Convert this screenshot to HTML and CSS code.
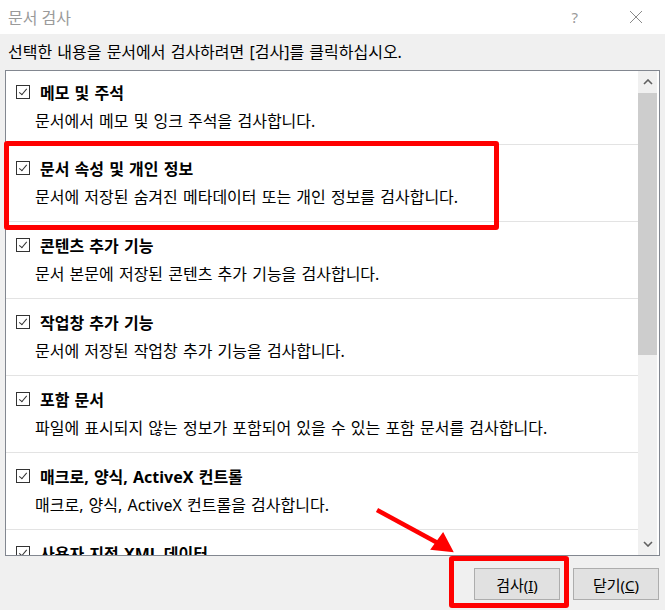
FILE: index.html
```html
<!DOCTYPE html>
<html lang="ko">
<head>
    <meta charset="UTF-8">
    <title>문서 검사</title>
    <link rel="stylesheet" href="styles.css">
</head>
<body>
    <div class="dialog">
        <div class="titlebar">
            <span class="title">문서 검사</span>
            <span class="help">?</span>
            <svg class="close" width="14" height="14" viewBox="0 0 14 14">
                <path d="M1 1 L13 13 M13 1 L1 13" stroke="#8a8a8a" stroke-width="1" fill="none"/>
            </svg>
        </div>

        <div class="intro">선택한 내용을 문서에서 검사하려면 [검사]를 클릭하십시오.</div>

        <div class="listbox">
            <div class="items">
                <div class="item">
                    <div class="item-title"><span class="check"></span>메모 및 주석</div>
                    <div class="item-desc">문서에서 메모 및 잉크 주석을 검사합니다.</div>
                </div>
                <div class="item">
                    <div class="item-title"><span class="check"></span>문서 속성 및 개인 정보</div>
                    <div class="item-desc">문서에 저장된 숨겨진 메타데이터 또는 개인 정보를 검사합니다.</div>
                </div>
                <div class="item">
                    <div class="item-title"><span class="check"></span>콘텐츠 추가 기능</div>
                    <div class="item-desc">문서 본문에 저장된 콘텐츠 추가 기능을 검사합니다.</div>
                </div>
                <div class="item">
                    <div class="item-title"><span class="check"></span>작업창 추가 기능</div>
                    <div class="item-desc">문서에 저장된 작업창 추가 기능을 검사합니다.</div>
                </div>
                <div class="item">
                    <div class="item-title"><span class="check"></span>포함 문서</div>
                    <div class="item-desc">파일에 표시되지 않는 정보가 포함되어 있을 수 있는 포함 문서를 검사합니다.</div>
                </div>
                <div class="item">
                    <div class="item-title"><span class="check"></span>매크로, 양식, ActiveX 컨트롤</div>
                    <div class="item-desc">매크로, 양식, ActiveX 컨트롤을 검사합니다.</div>
                </div>
                <div class="item">
                    <div class="item-title"><span class="check"></span>사용자 지정 XML 데이터</div>
                </div>
            </div>

            <div class="scrollbar">
                <div class="arrow">
                    <svg width="10" height="6" viewBox="0 0 10 6"><path d="M1 5 L5 1 L9 5" stroke="#606060" stroke-width="1.6" fill="none"/></svg>
                </div>
                <div class="thumb"></div>
                <div class="track"></div>
                <div class="arrow">
                    <svg width="10" height="6" viewBox="0 0 10 6"><path d="M1 1 L5 5 L9 1" stroke="#606060" stroke-width="1.6" fill="none"/></svg>
                </div>
            </div>
        </div>

        <div class="buttons">
            <button class="btn">검사(<u>I</u>)</button>
            <button class="btn">닫기(<u>C</u>)</button>
        </div>

        <!-- red annotations drawn over the dialog -->
        <div class="mark mark-options"></div>
        <div class="mark mark-button"></div>
        <svg class="mark-arrow" width="665" height="610" viewBox="0 0 665 610">
            <path d="M377 510 L447 548" stroke="#f00" stroke-width="4.5" fill="none"/>
            <path d="M452 551 L443 534 L432 549 Z" fill="#f00" stroke="#f00" stroke-width="2"/>
        </svg>
    </div>
</body>
</html>
```

FILE: styles.css
```css
body {
    margin: 0;
    background: #f0f0f0;
    font-family: "Noto Sans", "Noto Sans CJK KR", sans-serif;
    color: #000;
}

.dialog {
    position: relative;
    width: 665px;
    height: 610px;
    overflow: hidden;
}

.titlebar {
    height: 34px;
    background: #fff;
    display: flex;
    align-items: center;
    padding-left: 8px;
}

.title {
    flex: 1;
    font-size: 16px;
    color: #9a9a9a;
}

.help {
    font-size: 15px;
    color: #9a9a9a;
    margin-right: 51px;
}

.close {
    margin-right: 22px;
}

.intro {
    height: 36px;
    line-height: 36px;
    padding-left: 8px;
    font-size: 16px;
    word-spacing: 1px;
}

.listbox {
    margin: 0 5px;
    height: 484px;
    border: 1px solid #828790;
    background: #fff;
    display: flex;
}

.items {
    flex: 1;
    overflow: hidden;
}

.item {
    padding: 13px 0 14px 0;
    border-bottom: 1px solid #e3e3e3;
}

.item:first-child {
    padding-top: 11px;
    padding-bottom: 13px;
}

.item-title {
    display: flex;
    align-items: center;
    height: 20px;
    padding-left: 10px;
    font-size: 16px;
    font-weight: bold;
    word-spacing: 1px;
}

.check {
    width: 12px;
    height: 12px;
    border: 1px solid #333;
    margin-right: 10px;
    position: relative;
    flex: none;
}

.check::after {
    content: "";
    position: absolute;
    left: 4px;
    top: 1px;
    width: 3px;
    height: 7px;
    border-right: 1px solid #333;
    border-bottom: 1px solid #333;
    transform: rotate(40deg);
}

.item-desc {
    margin-top: 9px;
    height: 20px;
    line-height: 20px;
    padding-left: 29px;
    font-size: 16px;
    word-spacing: 1px;
}

.scrollbar {
    width: 19px;
    margin-right: 2px;
    background: #f0f0f0;
    display: flex;
    flex-direction: column;
}

.arrow {
    height: 22px;
    display: flex;
    align-items: center;
    justify-content: center;
}

.thumb {
    height: 262px;
    background: #cdcdcd;
}

.track {
    flex: 1;
}

.buttons {
    display: flex;
    justify-content: flex-end;
    gap: 13px;
    padding: 12px 6px 0 0;
}

.btn {
    width: 86px;
    height: 32px;
    background: #e1e1e1;
    border: 1px solid #adadad;
    font-family: "Noto Sans", "Noto Sans CJK KR", sans-serif;
    font-size: 15px;
    color: #000;
    padding: 0;
}

.mark {
    position: absolute;
    border: 5px solid #f00;
    border-radius: 3px;
}

.mark-options {
    left: 4px;
    top: 141px;
    width: 485px;
    height: 79px;
}

.mark-button {
    left: 449px;
    top: 556px;
    width: 110px;
    height: 42px;
}

.mark-arrow {
    position: absolute;
    left: 0;
    top: 0;
}
```
